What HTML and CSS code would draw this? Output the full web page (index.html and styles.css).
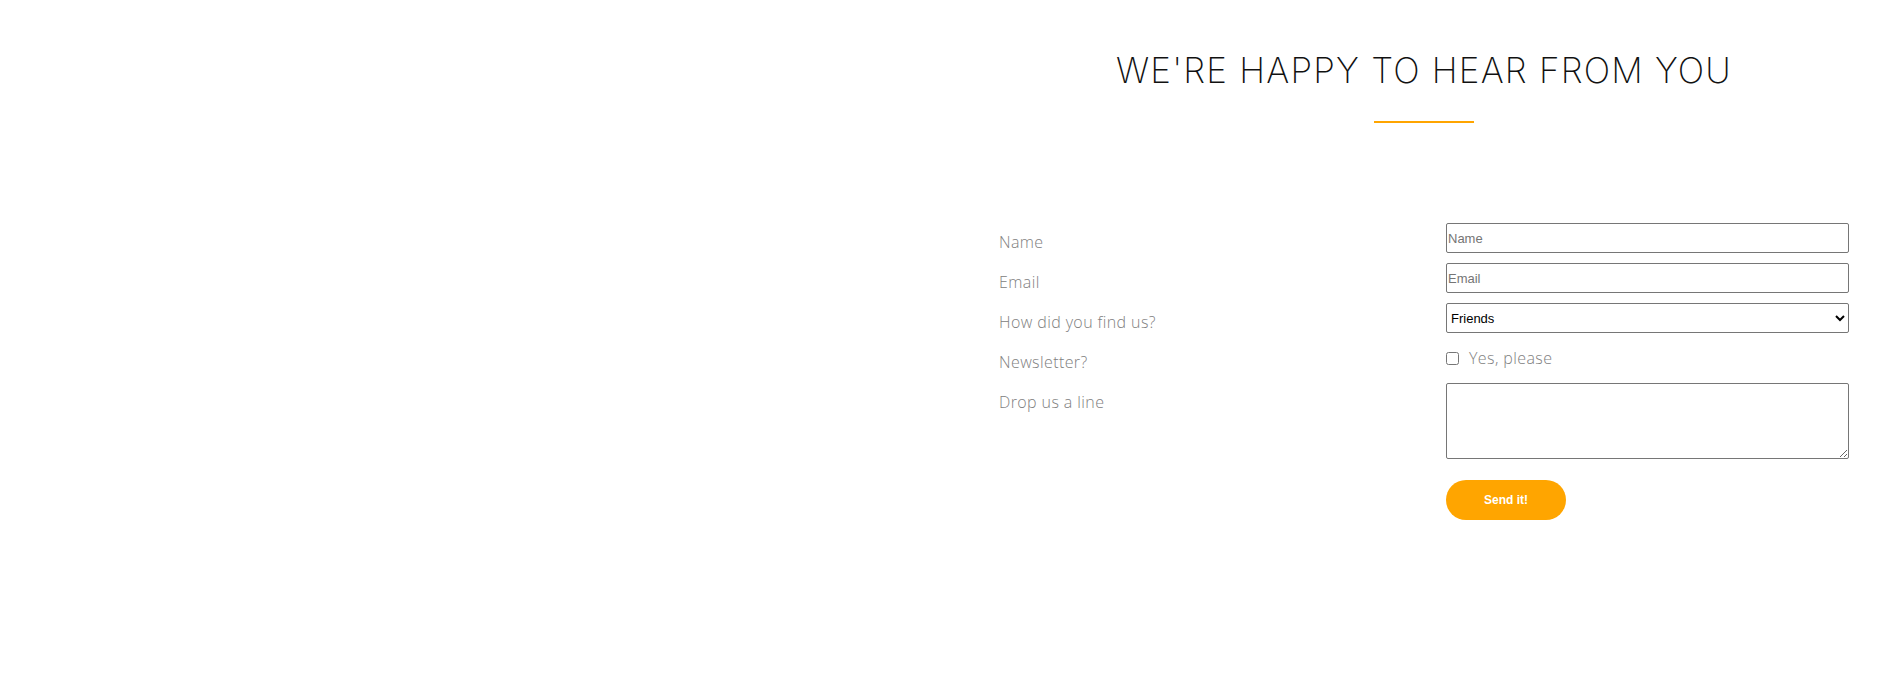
FILE: index.html
```html
<!DOCTYPE html>
<html lang="en">
<head>
<meta charset="utf-8">
<title>Contact</title>
<link rel="stylesheet" href="styles.css">
</head>
<body>
<main class="page">
  <div class="left"></div>
  <section class="right">
    <header class="head">
      <h1 class="title">WE'RE HAPPY TO HEAR FROM YOU</h1>
      <div class="rule"></div>
    </header>
    <form class="form">
      <label class="lbl" for="name">Name</label>
      <input class="field" id="name" type="text" placeholder="Name">
      <label class="lbl" for="email">Email</label>
      <input class="field" id="email" type="email" placeholder="Email">
      <label class="lbl" for="find">How did you find us?</label>
      <select class="field sel" id="find">
        <option>Friends</option>
        <option>Search engine</option>
        <option>Advert</option>
      </select>
      <span class="lbl">Newsletter?</span>
      <label class="check"><input type="checkbox" class="box"><span>Yes, please</span></label>
      <label class="lbl" for="msg">Drop us a line</label>
      <textarea class="field area" id="msg"></textarea>
      <span></span>
      <button type="button" class="send">Send it!</button>
    </form>
  </section>
</main>
</body>
</html>
```
FILE: styles.css
```css
html, body {
  margin: 0;
  padding: 0;
  background: #fff;
}
.page {
  display: grid;
  grid-template-columns: 945px 945px;
  width: 1890px;
  min-height: 690px;
}
.right {
  padding: 0 41px 0 54px;
}
.head {
  width: 850px;
  display: flex;
  flex-direction: column;
  align-items: center;
  padding-top: 49px;
}
.title {
  margin: 0;
  font-family: Inter, "Open Sans", sans-serif;
  font-weight: 200;
  font-size: 35px;
  line-height: 42px;
  color: #111;
  letter-spacing: 1.2px;
  white-space: nowrap;
}
.rule {
  width: 100px;
  height: 2px;
  background: #ffa500;
  margin-top: 30px;
}
.form {
  display: grid;
  grid-template-columns: 447px 403px;
  grid-auto-rows: auto;
  row-gap: 10px;
  margin-top: 100px;
}
.lbl {
  align-self: start;
  font-family: "Open Sans", sans-serif;
  font-weight: 300;
  font-size: 16px;
  line-height: 20px;
  padding-top: 9px;
  letter-spacing: 0.4px;
  color: #808080;
}
.field {
  box-sizing: border-box;
  width: 403px;
  height: 30px;
  margin: 0;
  border: 1px solid #767676;
  border-radius: 2px;
  padding: 1px 1px;
  font-family: Arial, "Liberation Sans", sans-serif;
  font-size: 13px;
  color: #000;
  background: #fff;
}
.field::placeholder {
  color: #757575;
}
.sel {
  padding: 1px 0;
}
.area {
  height: 76px;
  resize: both;
}
.check {
  height: 30px;
  display: flex;
  align-items: center;
  gap: 10px;
  font-family: "Open Sans", sans-serif;
  font-weight: 300;
  font-size: 16px;
  letter-spacing: 0.4px;
  color: #808080;
}
.box {
  margin: 0;
  width: 13px;
  height: 13px;
}
.send {
  margin-top: 11px;
  width: 120px;
  height: 40px;
  border: none;
  border-radius: 20px;
  background: #ffa500;
  color: #fff;
  font-family: Arial, "Liberation Sans", sans-serif;
  font-weight: bold;
  font-size: 12px;
  cursor: pointer;
}
```
